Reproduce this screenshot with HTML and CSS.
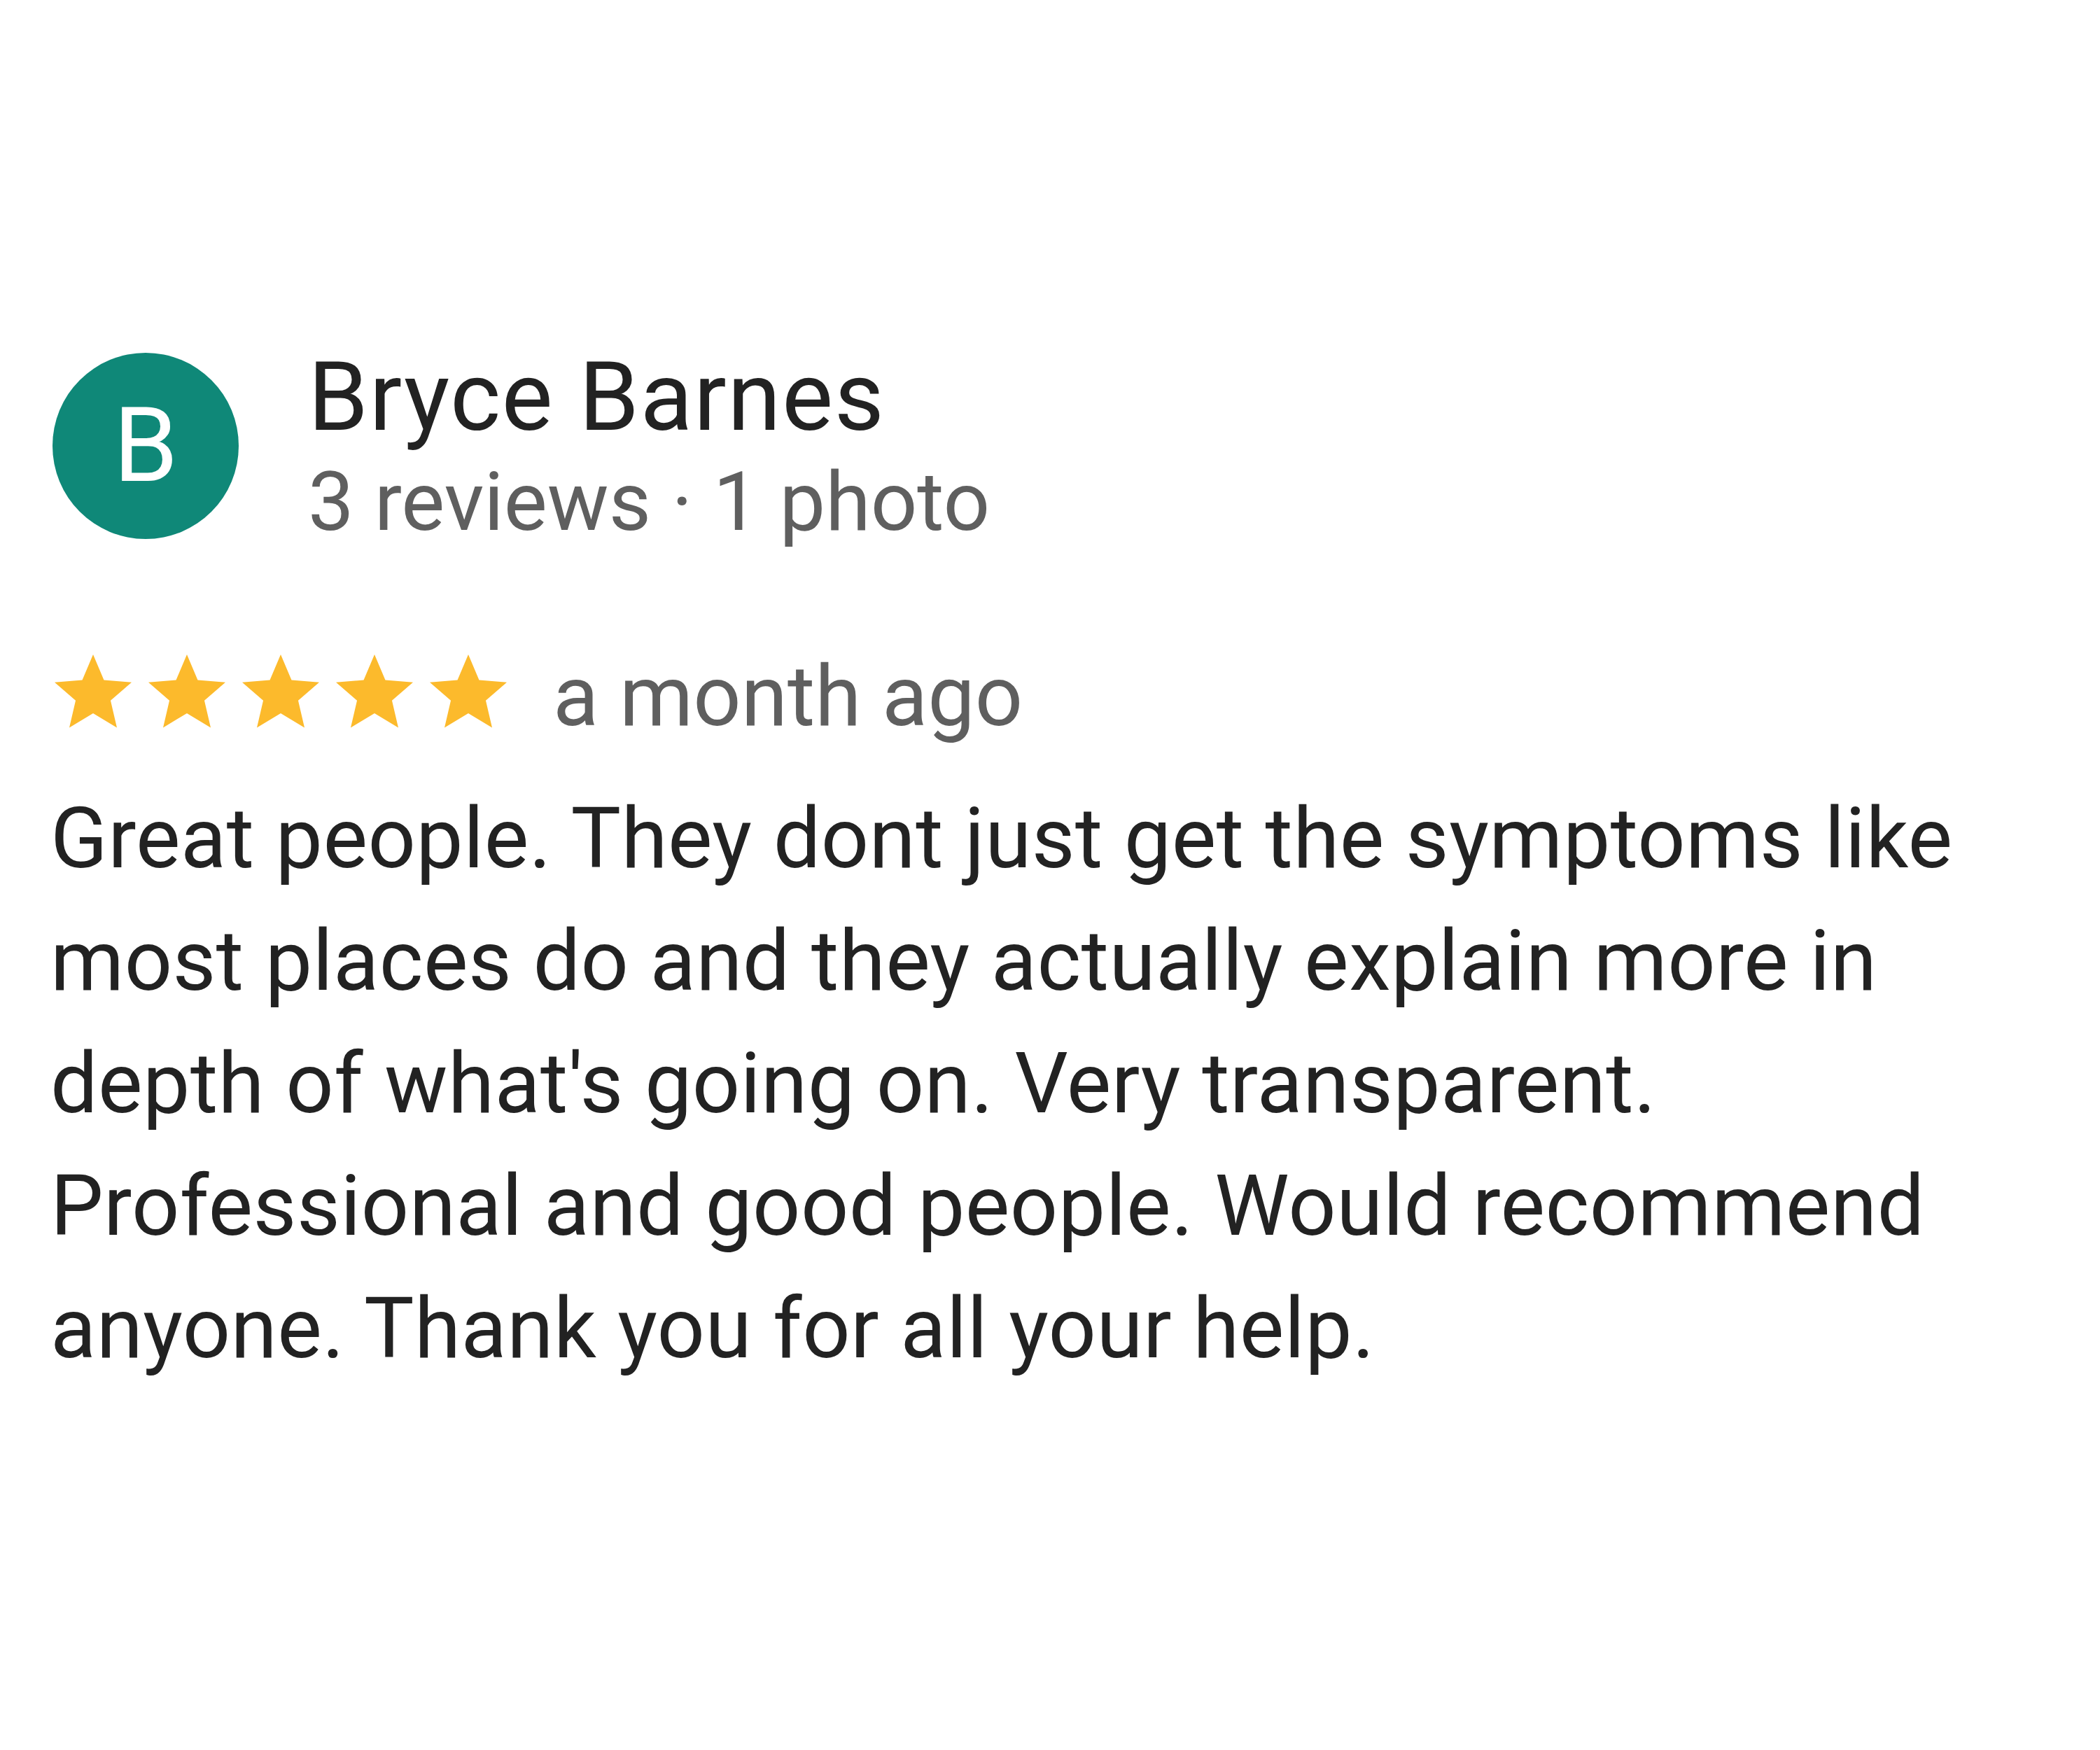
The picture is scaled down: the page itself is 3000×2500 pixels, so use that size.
FILE: index.html
```html
<!DOCTYPE html>
<html lang="en">
<head>
<meta charset="utf-8">
<title>Review</title>
<link rel="stylesheet" href="styles.css">
</head>
<body>
<main class="review">
  <header class="reviewer">
    <div class="avatar">B</div>
    <div class="reviewer-info">
      <div class="name">Bryce Barnes</div>
      <div class="meta">3 reviews · 1 photo</div>
    </div>
  </header>
  <div class="rating-row">
    <div class="stars">
      <svg class="star" viewBox="0 0 24 24"><path d="M12 17.27L18.18 21l-1.64-7.03L22 9.24l-7.19-.61L12 2 9.19 8.63 2 9.24l5.46 4.73L5.82 21z"/></svg>
      <svg class="star" viewBox="0 0 24 24"><path d="M12 17.27L18.18 21l-1.64-7.03L22 9.24l-7.19-.61L12 2 9.19 8.63 2 9.24l5.46 4.73L5.82 21z"/></svg>
      <svg class="star" viewBox="0 0 24 24"><path d="M12 17.27L18.18 21l-1.64-7.03L22 9.24l-7.19-.61L12 2 9.19 8.63 2 9.24l5.46 4.73L5.82 21z"/></svg>
      <svg class="star" viewBox="0 0 24 24"><path d="M12 17.27L18.18 21l-1.64-7.03L22 9.24l-7.19-.61L12 2 9.19 8.63 2 9.24l5.46 4.73L5.82 21z"/></svg>
      <svg class="star" viewBox="0 0 24 24"><path d="M12 17.27L18.18 21l-1.64-7.03L22 9.24l-7.19-.61L12 2 9.19 8.63 2 9.24l5.46 4.73L5.82 21z"/></svg>
    </div>
    <span class="date">a month ago</span>
  </div>
  <p class="text">Great people. They dont just get the symptoms like most places do and they actually explain more in depth of what's going on. Very transparent. Professional and good people. Would recommend anyone. Thank you for all your help.</p>
</main>
</body>
</html>
```

FILE: styles.css
```css
html, body {
  margin: 0;
  padding: 0;
  background: #ffffff;
}

body {
  font-family: Roboto, "Liberation Sans", Arial, sans-serif;
  color: #222222;
}

.review {
  width: 2828px;
  padding: 487px 0 0 72px;
}

.reviewer {
  display: flex;
  align-items: center;
}

.avatar {
  width: 266px;
  height: 266px;
  margin-left: 3px;
  border-radius: 50%;
  background: #0f8878;
  color: #ffffff;
  font-size: 148px;
  line-height: 266px;
  text-align: center;
  flex: none;
}

.reviewer-info {
  margin-left: 99px;
}

.name {
  font-size: 138px;
  line-height: 160px;
  letter-spacing: 1.5px;
  color: #222222;
}

.meta {
  font-size: 117px;
  line-height: 140px;
  color: #5f5f5f;
}

.rating-row {
  display: flex;
  align-items: center;
  margin-top: 132px;
}

.stars {
  display: flex;
  gap: 2px;
  margin-left: -5px;
}

.star {
  width: 132px;
  height: 132px;
  fill: #fcba2c;
  display: block;
}

.date {
  font-size: 120px;
  line-height: 132px;
  padding-top: 10px;
  margin-left: 55px;
  color: #5f5f5f;
}

.text {
  margin: 50px 0 0 0;
  font-size: 120px;
  line-height: 175px;
  letter-spacing: 0.4px;
  color: #222222;
}
```
